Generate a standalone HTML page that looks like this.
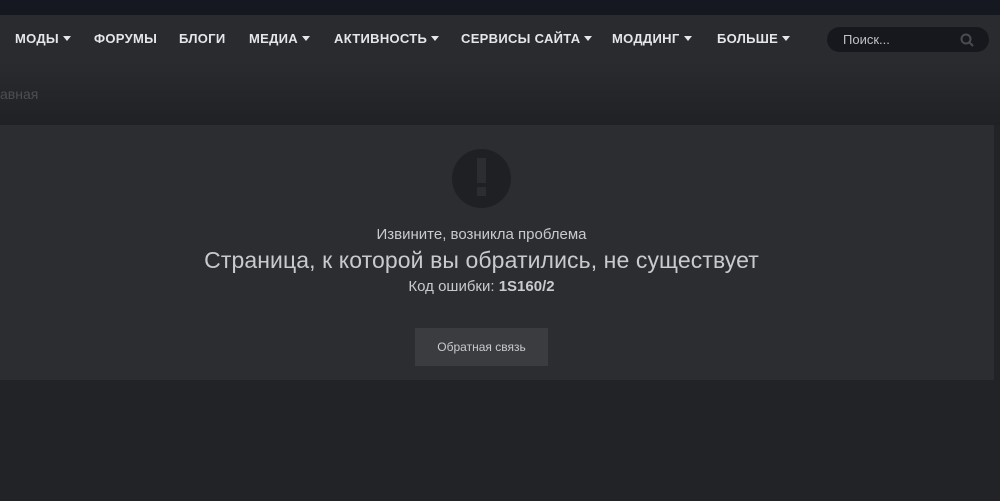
<!DOCTYPE html>
<html><head><meta charset="utf-8"><style>
*{margin:0;padding:0;box-sizing:border-box}
body{width:1000px;height:501px;overflow:hidden;background:#222326;font-family:"Liberation Sans",sans-serif;position:relative}
.top{position:absolute;left:0;top:0;width:1000px;height:15px;background:#161821}
.nav{position:absolute;left:0;top:15px;width:1000px;height:47px;background:#2a2b2f}
.nav span{position:absolute;top:16px;color:#e6e6e8;font-weight:bold;font-size:13px;letter-spacing:0.3px;white-space:nowrap}
.car{display:inline-block;width:0;height:0;border-left:4px solid transparent;border-right:4px solid transparent;border-top:5px solid #e6e6e8;margin-left:4px;vertical-align:2px}
.search{position:absolute;left:827px;top:27px;width:162px;height:25px;background:#17181d;border-radius:13px}
.search span{position:absolute;left:16px;top:5px;color:#bfc0c4;font-size:13px}
.bc{position:absolute;left:0;top:62px;width:1000px;height:63px;background:linear-gradient(#2a2b2f,#202124)}
.bc span{position:absolute;left:0;top:24px;color:#4d4e53;font-size:14px}
.panel{position:absolute;left:0;top:125px;width:994px;height:255px;background:#2c2d31}
.icon{position:absolute;left:452px;top:149px;width:59px;height:59px;border-radius:50%;background:#1f2023}
.icon b{position:absolute;left:25px;top:9px;width:9px;height:25px;background:#2c2d31}
.icon i{position:absolute;left:25px;top:38px;width:9px;height:9px;background:#2c2d31}
.t{position:absolute;left:0;width:963px;text-align:center;color:#c9cace}
.btn{position:absolute;left:415px;top:328px;width:133px;height:38px;background:#3b3c40;color:#c9cace;font-size:12px;text-align:center;line-height:38px}
</style></head><body>
<div class="top"></div>
<div class="nav">
<span style="left:15px">МОДЫ<i class="car"></i></span>
<span style="left:94px">ФОРУМЫ</span>
<span style="left:179px">БЛОГИ</span>
<span style="left:249px">МЕДИА<i class="car"></i></span>
<span style="left:334px">АКТИВНОСТЬ<i class="car"></i></span>
<span style="left:461px">СЕРВИСЫ САЙТА<i class="car"></i></span>
<span style="left:612px">МОДДИНГ<i class="car"></i></span>
<span style="left:717px">БОЛЬШЕ<i class="car"></i></span>
</div>
<div class="search"><span>Поиск...</span>
<svg style="position:absolute;left:133px;top:6px" width="14" height="14" viewBox="0 0 14 14"><circle cx="6" cy="6" r="4.5" fill="none" stroke="#4a4b50" stroke-width="2"/><line x1="9.5" y1="9.5" x2="13" y2="13" stroke="#4a4b50" stroke-width="2"/></svg></div>
<div class="bc"><span>авная</span></div>
<div class="panel"></div>
<div class="icon"><b></b><i></i></div>
<div class="t" style="top:226px;font-size:15px">Извините, возникла проблема</div>
<div class="t" style="top:247px;font-size:23px;letter-spacing:0.1px">Страница, к которой вы обратились, не существует</div>
<div class="t" style="top:278px;font-size:15px">Код ошибки: <b>1S160/2</b></div>
<div class="btn">Обратная связь</div>
</body></html>
